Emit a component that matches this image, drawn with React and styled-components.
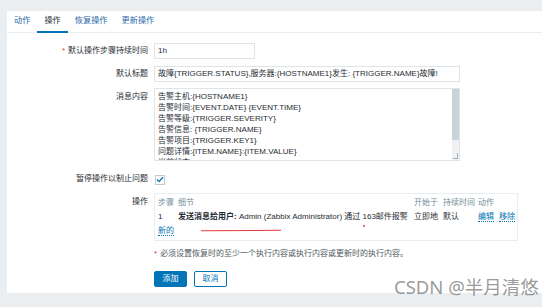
import React from "react";
import styled, { createGlobalStyle } from "styled-components";

const GlobalStyle = createGlobalStyle`
  html, body {
    margin: 0;
    padding: 0;
    background: #ffffff;
  }
  body {
    font-family: "Liberation Sans", "Noto Sans CJK SC", sans-serif;
    font-size: 8px;
    color: #1f2c33;
  }
  * {
    box-sizing: border-box;
  }
`;

const Page = styled.div`
  position: relative;
  width: 542px;
  height: 307px;
  background: #ebeef0;
  padding: 11px 0 14px 7px;
  display: flex;
  flex-direction: column;
`;

const Panel = styled.div`
  flex: 1;
  background: #ffffff;
  display: flex;
  flex-direction: column;
`;

const Tabs = styled.div`
  display: flex;
  height: 22px;
  border-bottom: 1px solid #ebeef0;
`;

const Tab = styled.div`
  padding: 0 7px;
  line-height: 20px;
  height: 22px;
  font-size: 8.2px;
  color: ${(p) => (p.active ? "#1f2c33" : "#2b6aa8")};
  border-bottom: 2px solid ${(p) => (p.active ? "#0275b8" : "transparent")};
`;

const Form = styled.div`
  padding-top: 10px;
  display: grid;
  grid-template-columns: 141px 1fr;
  column-gap: 6px;
  align-items: start;
`;

const Label = styled.div`
  text-align: right;
  line-height: 16px;
  padding-top: ${(p) => p.top || 0}px;
  white-space: nowrap;
`;

const Required = styled.span`
  color: #e33734;
  margin-right: 3px;
`;

const Field = styled.div`
  margin-bottom: ${(p) => p.gap || 7}px;
`;

const TextInput = styled.div`
  width: ${(p) => p.width}px;
  height: 16px;
  border: 1px solid #dfe4e7;
  padding: 0 3px;
  line-height: 14px;
  white-space: nowrap;
  overflow: hidden;
`;

const TextArea = styled.div`
  width: 306px;
  height: 73px;
  border: 1px solid #dfe4e7;
  display: flex;
`;

const AreaText = styled.div`
  flex: 1;
  overflow: hidden;
  padding: 2px 3px;
  line-height: 11px;
  white-space: nowrap;
`;

const ScrollBar = styled.div`
  width: 7px;
  background: #eef0f1;
  display: flex;
  flex-direction: column;
  justify-content: space-between;
`;

const Thumb = styled.div`
  height: 51px;
  background: #c8d3d9;
`;

const Grip = styled.div`
  height: 6px;
  border-right: 1px solid #a7b0b5;
  border-bottom: 1px solid #a7b0b5;
  margin: 0 1px 1px 1px;
`;

const CheckRow = styled.div`
  height: 19px;
  display: flex;
  align-items: center;
  margin-bottom: 6px;
`;

const CheckBox = styled.div`
  width: 10px;
  height: 10px;
  margin-left: 1px;
  margin-top: 4px;
  border: 1px solid #bfc9ce;
  display: flex;
  align-items: center;
  justify-content: center;
`;

const OpsBox = styled.div`
  position: relative;
  width: 364px;
  border: 1px solid #ebeef0;
  padding: 2px 3px;
  margin-bottom: 6px;
`;

const OpsTable = styled.table`
  border-collapse: collapse;
  width: 100%;
  table-layout: fixed;
  td, th {
    padding: 0;
    height: 14px;
    line-height: 14px;
    text-align: left;
    font-weight: normal;
    white-space: nowrap;
    overflow: visible;
  }
  th {
    color: #768d99;
  }
`;

const Bold = styled.b`
  font-weight: bold;
`;

const LinkText = styled.span`
  color: #0275b8;
  border-bottom: 1px dotted #0275b8;
  margin-right: ${(p) => p.gap || 0}px;
`;

const NewLine = styled.div`
  height: 14px;
  line-height: 14px;
`;

const RedStroke = styled.div`
  position: absolute;
  left: 46px;
  top: 36px;
  width: 80px;
  height: 1px;
  background: #e83a3a;
  transform: rotate(-0.3deg);
`;

const RedDot = styled.div`
  position: absolute;
  left: 208px;
  top: 31px;
  width: 2px;
  height: 2px;
  border-radius: 1px;
  background: #e83a3a;
`;

const Note = styled.div`
  grid-column: 2;
  line-height: 14px;
  color: #4f5a60;
  margin-bottom: 10px;
`;

const Buttons = styled.div`
  grid-column: 2;
  display: flex;
  gap: 7px;
`;

const Button = styled.div`
  width: 33px;
  height: 16px;
  line-height: 14px;
  text-align: center;
  border: 1px solid #0275b8;
  background: ${(p) => (p.primary ? "#0275b8" : "#ffffff")};
  color: ${(p) => (p.primary ? "#ffffff" : "#0275b8")};
  border-radius: 2px;
`;

const Watermark = styled.div`
  position: absolute;
  left: 394px;
  top: 275px;
  font-family: "Noto Sans", "Noto Sans CJK SC", sans-serif;
  font-size: 18.5px;
  line-height: 24px;
  color: rgba(110, 110, 110, 0.7);
  white-space: nowrap;
`;

const messageLines = [
  "告警主机:{HOSTNAME1}",
  "告警时间:{EVENT.DATE} {EVENT.TIME}",
  "告警等级:{TRIGGER.SEVERITY}",
  "告警信息: {TRIGGER.NAME}",
  "告警项目:{TRIGGER.KEY1}",
  "问题详情:{ITEM.NAME}:{ITEM.VALUE}",
  "当前状态:{TRIGGER.STATUS}:{ITEM.VALUE1}",
];

const tabs = ["动作", "操作", "恢复操作", "更新操作"];

export default function App() {
  return (
    <>
      <GlobalStyle />
      <Page>
        <Panel>
          <Tabs>
            {tabs.map((t) => (
              <Tab key={t} active={t === "操作"}>
                {t}
              </Tab>
            ))}
          </Tabs>
          <Form>
            <Label>
              <Required>*</Required>默认操作步骤持续时间
            </Label>
            <Field>
              <TextInput width={101}>1h</TextInput>
            </Field>

            <Label>默认标题</Label>
            <Field gap={6}>
              <TextInput width={306}>
                故障{"{TRIGGER.STATUS}"},服务器:{"{HOSTNAME1}"}发生: {"{TRIGGER.NAME}"}故障!
              </TextInput>
            </Field>

            <Label top={1}>消息内容</Label>
            <Field gap={0}>
              <TextArea>
                <AreaText>
                  {messageLines.map((l) => (
                    <div key={l}>{l}</div>
                  ))}
                </AreaText>
                <ScrollBar>
                  <Thumb />
                  <Grip />
                </ScrollBar>
              </TextArea>
            </Field>

            <Label top={3}>暂停操作以制止问题</Label>
            <CheckRow>
              <CheckBox>
                <svg width="8" height="7" viewBox="0 0 8 7">
                  <path d="M1 3.6 L3 5.6 L7 1.2" fill="none" stroke="#0275b8" strokeWidth="1.4" />
                </svg>
              </CheckBox>
            </CheckRow>

            <Label top={1}>操作</Label>
            <OpsBox>
              <OpsTable>
                <colgroup>
                  <col style={{ width: 20 }} />
                  <col style={{ width: 236 }} />
                  <col style={{ width: 29 }} />
                  <col style={{ width: 35 }} />
                  <col />
                </colgroup>
                <thead>
                  <tr>
                    <th>步骤</th>
                    <th>细节</th>
                    <th>开始于</th>
                    <th>持续时间</th>
                    <th>动作</th>
                  </tr>
                </thead>
                <tbody>
                  <tr>
                    <td>1</td>
                    <td>
                      <Bold>发送消息给用户:</Bold> Admin (Zabbix Administrator) 通过 163邮件报警
                    </td>
                    <td>立即地</td>
                    <td>默认</td>
                    <td>
                      <LinkText gap={5}>编辑</LinkText>
                      <LinkText>移除</LinkText>
                    </td>
                  </tr>
                </tbody>
              </OpsTable>
              <NewLine>
                <LinkText>新的</LinkText>
              </NewLine>
              <RedStroke />
              <RedDot />
            </OpsBox>

            <Note>
              <Required>*</Required>必须设置恢复时的至少一个执行内容或执行内容或更新时的执行内容。
            </Note>
            <Buttons>
              <Button primary>添加</Button>
              <Button>取消</Button>
            </Buttons>
          </Form>
        </Panel>
        <Watermark>CSDN @半月清悠</Watermark>
      </Page>
    </>
  );
}
